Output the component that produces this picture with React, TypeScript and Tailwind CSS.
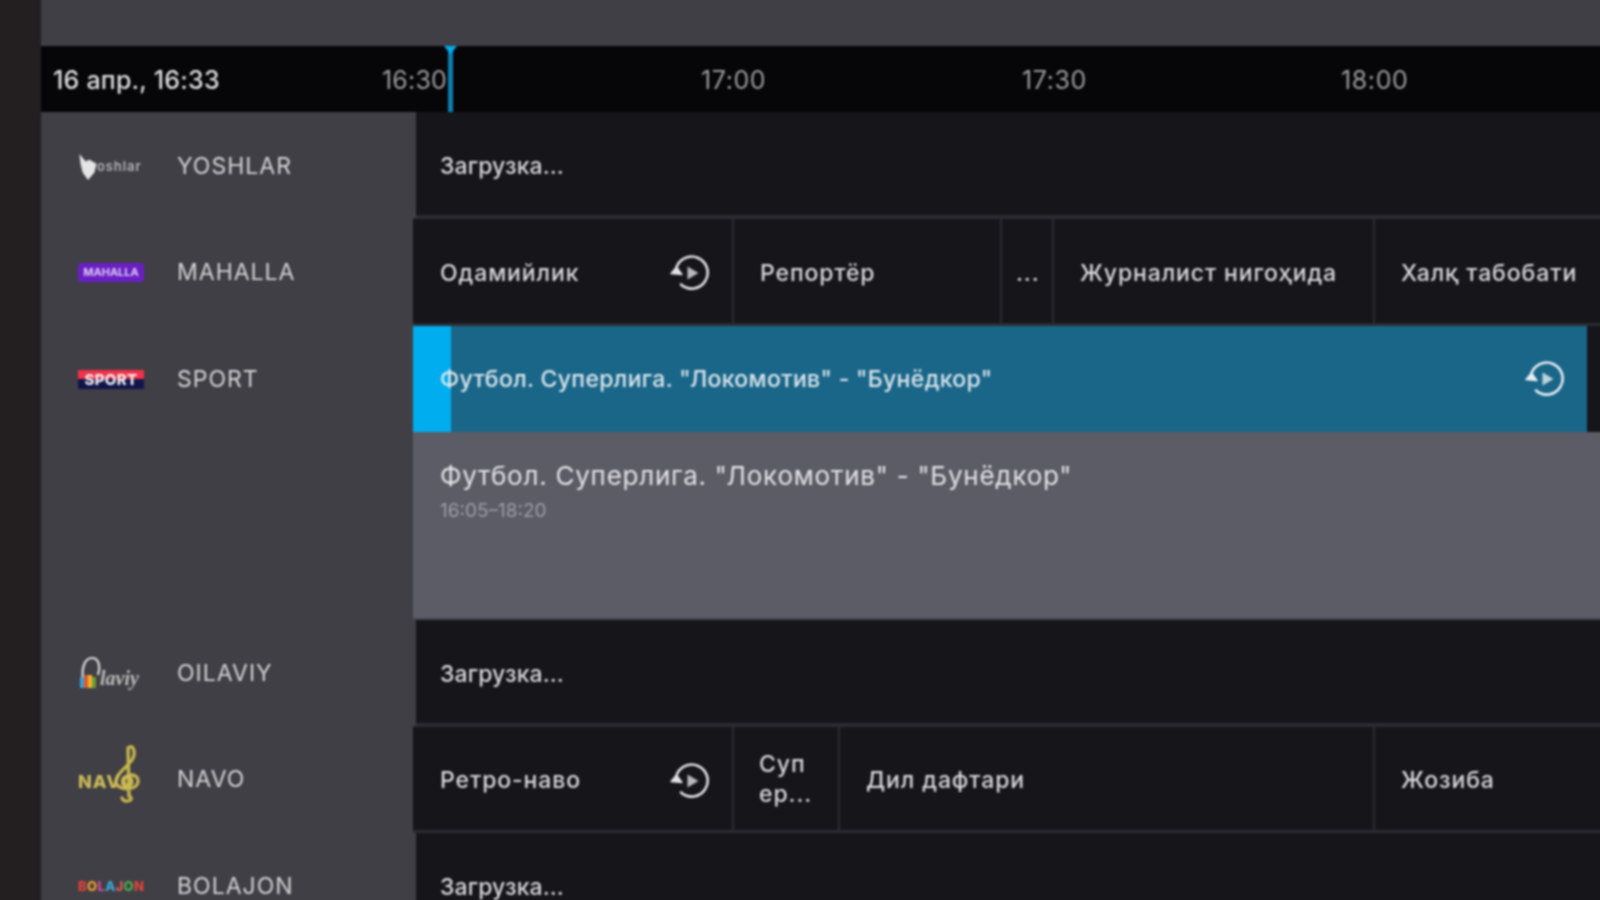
import React from "react";

// Replay badge shown on programmes that have an archive
function ReplayIcon({ className = "" }: { className?: string }) {
  return (
    <svg viewBox="0 0 40 38" className={`w-10 h-[38px] shrink-0 ${className}`} fill="none">
      <path
        d="M6.2 14.5 A16 16 0 1 1 11 30.5"
        stroke="currentColor"
        strokeWidth="2.6"
        strokeLinecap="round"
      />
      <path d="M1 19.5 L6.5 13 L12 20.5 Z" fill="currentColor" stroke="currentColor" strokeWidth="1.4" strokeLinejoin="round" />
      <path d="M17.5 12.5 L28.5 19 L17.5 25.5 Z" fill="currentColor" opacity="0.8" />
    </svg>
  );
}

function YoshlarLogo() {
  return (
    <div className="flex items-center w-[66px]">
      <svg viewBox="0 0 18 26" className="w-[20px] h-[28px] shrink-0">
        <path d="M1 1 L7 8 L10 6 L17 10 L15 18 L9 25 L4 18 L2 10 Z" fill="#e4e4e4" />
      </svg>
      <span className="text-[13px] leading-none font-semibold text-[#b4b4b8] -ml-px tracking-[0.9px]">oshlar</span>
    </div>
  );
}

function MahallaLogo() {
  return (
    <div className="w-[66px] h-[19px] rounded-[3px] bg-[#6a1fc4] flex items-center justify-center text-[11px] font-bold leading-none text-[#dccdf2]">
      MAHALLA
    </div>
  );
}

function SportLogo() {
  return (
    <div className="w-[66px] h-[19px] bg-[linear-gradient(#f0324a_0,#f0324a_45%,#10144a_50%,#10144a_100%)] flex items-center justify-center text-[15px] font-extrabold leading-none text-[#f2eef0] tracking-[0.3px]">
      SPORT
    </div>
  );
}

function OilaviyLogo() {
  return (
    <div className="flex items-end w-[66px] h-[36px]">
      <svg viewBox="0 0 24 36" className="w-[24px] h-[36px] shrink-0">
        <path d="M5 26 C3 10 8 3 14 3 C20 3 23 10 20 20" stroke="#dcdcdc" strokeWidth="2.2" fill="none" />
        <rect x="2" y="22" width="4" height="11" fill="#3aa0dc" />
        <rect x="6" y="20" width="4" height="13" fill="#e0562c" />
        <rect x="10" y="20" width="4" height="13" fill="#eeb52a" />
        <rect x="14" y="22" width="4" height="11" fill="#6e9c38" />
      </svg>
      <span className="font-['Liberation_Serif',serif] italic font-bold text-[20px] leading-none mb-[3px] -ml-[2px] text-[#bcbcbe]">laviy</span>
    </div>
  );
}

function NavoLogo() {
  return (
    <div className="relative w-[66px] h-[62px] flex items-center">
      <svg viewBox="0 0 30 60" className="absolute left-[34px] -top-[6px] w-[30px] h-[62px]" fill="none">
        <path
          d="M17 52 C24 56 12 60 10 54 M17 52 L16 4 C22 -1 24 10 20 16 C12 26 4 30 4 38 C4 46 24 48 26 38 C27 30 15 28 12 36 C11 40 15 43 18 41"
          stroke="#c6b44e"
          strokeWidth="3.4"
          strokeLinecap="round"
        />
      </svg>
      <span className="relative text-[18px] font-extrabold leading-none mt-[4px] text-[#cdbb58] tracking-[1px]">NAVO</span>
    </div>
  );
}

function BolajonLogo() {
  const letters = [
    ["B", "text-[#e8433c]"],
    ["O", "text-[#f0a030]"],
    ["L", "text-[#d84a9a]"],
    ["A", "text-[#3fa7d6]"],
    ["J", "text-[#e05a5a]"],
    ["O", "text-[#4caf50]"],
    ["N", "text-[#e8433c]"],
  ];
  return (
    <div className="w-[66px] flex justify-between text-[13px] font-extrabold leading-none">
      {letters.map(([ch, color], i) => (
        <span key={i} className={color}>{ch}</span>
      ))}
    </div>
  );
}

function ChannelCell({ logo, name, wide, className = "" }: { logo: React.ReactNode; name: string; wide?: boolean; className?: string }) {
  return (
    <div className={`${wide ? "w-[375px]" : "w-[372px]"} shrink-0 h-full flex items-center pl-[37px] bg-[#3f3f45] ${className}`}>
      <div className="w-[66px] flex justify-center shrink-0">{logo}</div>
      <span className="ml-[33px] text-[23px] tracking-[1px] text-[#d4d4d6]">{name}</span>
    </div>
  );
}

type Program = { title: string; width: string; replay?: boolean; wrap?: boolean; tight?: boolean };

function ProgramCell({ title, width, replay, wrap, tight }: Program) {
  return (
    <div className={`${width} shrink-0 h-full bg-[#15151a] flex items-center justify-between pt-[4px] ${tight ? "pl-[14px]" : wrap ? "pl-[25px]" : "pl-[26px] first:pl-[27px]"} pr-[22px] overflow-hidden`}>
      <span className={`text-[23px] tracking-[0.9px] font-medium text-[#d8d8da] ${wrap ? "leading-[30px] whitespace-pre-line -mt-[4px]" : "whitespace-nowrap"}`}>{title}</span>
      {replay && <ReplayIcon className="text-[#e2e2e4]" />}
    </div>
  );
}

function LoadingRow({ logo, name, h, className }: { logo: React.ReactNode; name: string; h: string; className?: string }) {
  return (
    <div className={`${h} flex shrink-0`}>
      <ChannelCell logo={logo} name={name} wide className={className} />
      <div className="flex-1 border-b-[3px] border-[#2b2c31] bg-[#15151a] flex items-center pl-6 pt-[5px] text-[23px] tracking-[0.1px] font-medium text-[#d8d8da]">
        Загрузка...
      </div>
    </div>
  );
}

function ProgramRow({ logo, name, h, programs }: { logo: React.ReactNode; name: string; h: string; programs: Program[] }) {
  return (
    <div className={`${h} flex shrink-0`}>
      <ChannelCell logo={logo} name={name} />
      <div className="flex-1 min-w-0 flex gap-[2px] bg-[#2b2c31] pt-[1px] pb-[3px] overflow-hidden">
        {programs.map((p) => (
          <ProgramCell key={p.title} {...p} />
        ))}
      </div>
    </div>
  );
}

export default function App() {
  return (
    <div className="w-[1600px] h-[900px] overflow-hidden">
      {/* Blurred layer runs 4px past the window so its edges do not fade in view */}
      <div className="w-[1608px] h-[908px] -m-[4px] flex bg-[#3f3f45] font-['Inter','Noto_Sans',sans-serif] blur-[0.8px]">
        <div className="w-[45px] shrink-0 bg-[#231f20]" />

        <div className="flex-1 min-w-0 flex flex-col">
          <div className="h-[50px] shrink-0 bg-[#3f3f45]" />

          {/* Timeline */}
          <div className="relative h-[66px] shrink-0 bg-[#060608] flex items-center pt-[4px] text-[25px] tracking-[0.6px] text-[#9b9b9f]">
            <div className="w-[341px] shrink-0 pl-3 tracking-[0.2px] font-medium text-[#dedee0]">16 апр., 16:33</div>
            <div className="w-[319px] shrink-0 tracking-[0.2px]">16:30</div>
            <div className="w-[321px] shrink-0">17:00</div>
            <div className="w-[319px] shrink-0">17:30</div>
            <div className="shrink-0">18:00</div>
            <div className="absolute left-[407px] top-0 bottom-0 w-[5px] bg-[#0d7fb0]" />
            <div className="absolute left-[403px] top-0 w-[13px] h-[8px] bg-[#00aeef] [clip-path:polygon(0_0,100%_0,50%_100%)]" />
          </div>

          <LoadingRow logo={<YoshlarLogo />} name="YOSHLAR" h="h-[106px]" className="pt-[3px]" />

          <ProgramRow
            logo={<MahallaLogo />}
            name="MAHALLA"
            h="h-[108px]"
            programs={[
              { title: "Одамийлик", width: "w-[319px]", replay: true },
              { title: "Репортёр", width: "w-[266px]" },
              { title: "...", width: "w-[50px]", tight: true },
              { title: "Журналист нигоҳида", width: "w-[319px]" },
              { title: "Халқ табобати", width: "w-[244px]" },
            ]}
          />

          {/* Selected channel with its details panel */}
          <div className="h-[294px] flex shrink-0">
            <div className="w-[372px] shrink-0 h-[106px]">
              <ChannelCell logo={<SportLogo />} name="SPORT" />
            </div>
            <div className="flex-1 min-w-0 flex flex-col">
              <div className="h-[106px] shrink-0 flex bg-[#15151a]">
                <div className="relative w-[1174px] shrink-0 bg-[#1a6689] flex items-center justify-between pl-[27px] pr-[22px]">
                  <div className="absolute left-0 top-0 bottom-0 w-[38px] bg-[#00aeef]" />
                  <span className="relative text-[23px] tracking-[0.35px] font-medium text-[#dbe6ec] whitespace-nowrap">
                    Футбол. Суперлига. "Локомотив" - "Бунёдкор"
                  </span>
                  <ReplayIcon className="text-[#e6eff3]" />
                </div>
              </div>
              <div className="flex-1 bg-[#5c5c66] pl-[27px] pt-[27px] border-b-[2px] border-[#46464d]">
                <div className="text-[26px] leading-[34px] tracking-[0.76px] text-[#e2e2e6]">
                  Футбол. Суперлига. "Локомотив" - "Бунёдкор"
                </div>
                <div className="text-[19px] leading-[24px] mt-[6px] text-[#9d9da6]">16:05–18:20</div>
              </div>
            </div>
          </div>

          <LoadingRow logo={<OilaviyLogo />} name="OILAVIY" h="h-[106px]" />

          <ProgramRow
            logo={<NavoLogo />}
            name="NAVO"
            h="h-[107px]"
            programs={[
              { title: "Ретро-наво", width: "w-[319px]", replay: true },
              { title: "Суп\nер...", width: "w-[104px]", wrap: true },
              { title: "Дил дафтари", width: "w-[533px]" },
              { title: "Жозиба", width: "w-[244px]" },
            ]}
          />

          <LoadingRow logo={<BolajonLogo />} name="BOLAJON" h="h-[107px]" />
        </div>
      </div>
    </div>
  );
}
